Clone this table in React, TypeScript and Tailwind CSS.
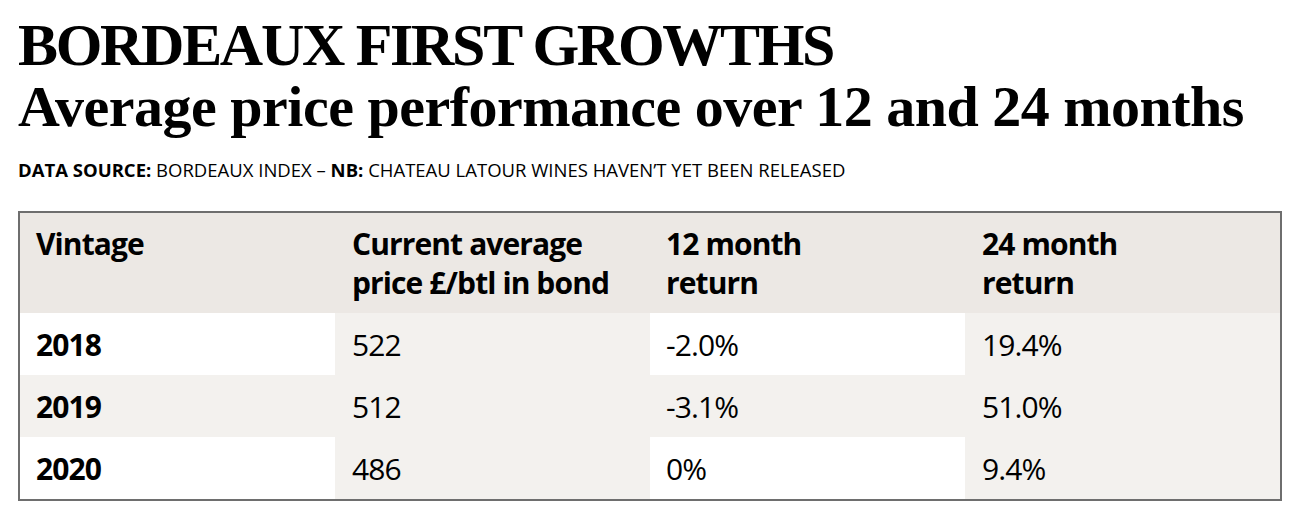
const rows = [
  { year: "2018", price: "522", m12: "-2.0%", m24: "19.4%", shaded: false },
  { year: "2019", price: "512", m12: "-3.1%", m24: "51.0%", shaded: true },
  { year: "2020", price: "486", m12: "0%", m24: "9.4%", shaded: false },
];

const sans = "font-['Open_Sans','Noto_Sans',sans-serif]";

const App = () => {
  return (
    <div className="w-[1300px] h-[516px] bg-white px-[18px] pt-[14px] text-black">
      <h1 className="font-['Liberation_Serif',serif] font-bold text-[60px] leading-[62px] tracking-[-2.3px]">
        BORDEAUX FIRST GROWTHS
      </h1>
      <h2 className="font-['Liberation_Serif',serif] font-bold text-[58px] leading-[62px] tracking-[-0.5px]">
        Average price performance over 12 and 24 months
      </h2>
      <p className={`${sans} mt-[22px] text-[18.5px] leading-[20px] tracking-[0px] uppercase`}>
        <span className="font-bold">Data source:</span> Bordeaux Index –{" "}
        <span className="font-bold">NB:</span> Chateau Latour wines haven’t yet been released
      </p>

      <div className={`${sans} mt-[31px] w-[1264px] border-2 border-[#6e6e6e] tracking-[-0.9px]`}>
        <div className="grid grid-cols-4 bg-[#ece8e4] h-[100px] font-bold text-[30px] leading-[39px]">
          <div className="pl-[16px] pt-[11px]">Vintage</div>
          <div className="pl-[17px] pt-[11px]">
            Current average
            <br />
            price £/btl in bond
          </div>
          <div className="pl-[16px] pt-[11px]">
            12 month
            <br />
            return
          </div>
          <div className="pl-[17px] pt-[11px]">
            24 month
            <br />
            return
          </div>
        </div>
        {rows.map((r) => (
          <div key={r.year} className="grid grid-cols-4 h-[62px] text-[30px] leading-[39px]">
            <div className={`pl-[16px] flex items-center font-bold ${r.shaded ? "bg-[#f3f1ee]" : "bg-white"}`}>
              {r.year}
            </div>
            <div className="pl-[17px] flex items-center bg-[#f3f1ee]">{r.price}</div>
            <div className={`pl-[16px] flex items-center ${r.shaded ? "bg-[#f3f1ee]" : "bg-white"}`}>
              {r.m12}
            </div>
            <div className="pl-[17px] flex items-center bg-[#f3f1ee]">{r.m24}</div>
          </div>
        ))}
      </div>
    </div>
  );
};

export default App;
